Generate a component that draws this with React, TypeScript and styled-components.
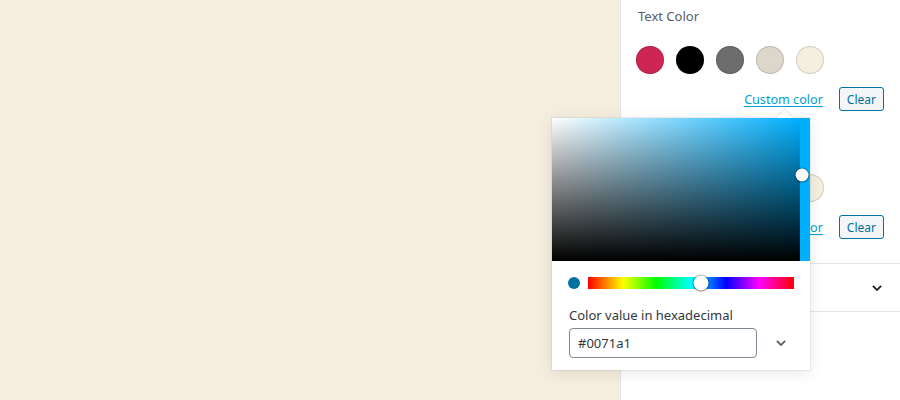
import styled, { createGlobalStyle } from "styled-components";

const GlobalStyle = createGlobalStyle`
  html, body {
    margin: 0;
    padding: 0;
    background: #f5eddd;
    font-family: "Noto Sans", "Open Sans", sans-serif;
  }
`;

const palette = ["#cd2653", "#000000", "#6d6d6d", "#dcd7ca", "#f5efe0"];

const Page = styled.div`
  position: relative;
  display: flex;
  width: 900px;
  height: 400px;
  overflow: hidden;
`;

const Canvas = styled.main`
  flex: 1;
  background: #f5eddd;
`;

const Sidebar = styled.aside`
  width: 279px;
  background: #fff;
  border-left: 1px solid #e2e4e7;
  display: flex;
  flex-direction: column;
`;

const PanelBody = styled.div`
  padding: 6px 16px 24px 15px;
  border-bottom: 1px solid #e2e4e7;
`;

const Section = styled.div`
  & + & {
    margin-top: 23px;
  }
`;

const Label = styled.div`
  font-size: 13px;
  line-height: 20px;
  color: #555d66;
  margin-left: 2px;
`;

const Swatches = styled.div`
  display: flex;
  gap: 12px;
  margin-top: 20px;
`;

const Swatch = styled.span<{ $color: string }>`
  width: 28px;
  height: 28px;
  border-radius: 50%;
  background: ${(p) => p.$color};
  box-shadow: inset 0 0 0 1px rgba(0, 0, 0, 0.14);
`;

const Actions = styled.div`
  display: flex;
  justify-content: flex-end;
  align-items: center;
  gap: 16px;
  margin-top: 13px;
`;

const CustomLink = styled.a`
  font-size: 12.6px;
  color: #00a0d2;
  text-decoration: underline;
  text-underline-offset: 2px;
`;

const ClearButton = styled.button`
  height: 24px;
  padding: 0 7px;
  font-family: inherit;
  font-size: 12px;
  color: #0071a1;
  background: #f3f5f6;
  border: 1px solid #0071a1;
  border-radius: 3px;
`;

const PanelHeader = styled.div`
  display: flex;
  align-items: center;
  justify-content: space-between;
  height: 47px;
  padding: 0 16px;
  border-bottom: 1px solid #e2e4e7;
  font-size: 13px;
  font-weight: 600;
  color: #191e23;
`;

const Popover = styled.div`
  position: absolute;
  left: 552px;
  top: 118px;
  width: 258px;
  background: #fff;
  box-shadow: 0 0 0 1px rgba(0, 0, 0, 0.05), 0 3px 14px rgba(25, 30, 35, 0.1);
`;

const Arrow = styled.span`
  position: absolute;
  top: -6px;
  right: 20px;
  width: 11px;
  height: 11px;
  background: #fff;
  transform: rotate(45deg);
  box-shadow: -1px -1px 0 rgba(0, 0, 0, 0.08);
`;

const Saturation = styled.div<{ $hue: string }>`
  position: relative;
  display: flex;
  height: 143px;
  background: ${(p) => p.$hue};
`;

const SatField = styled.div<{ $hue: string }>`
  flex: 1;
  margin-right: 10px;
  background: linear-gradient(to top, #000, rgba(0, 0, 0, 0)),
    linear-gradient(to right, #fff, rgba(255, 255, 255, 0)), ${(p) => p.$hue};
`;

const Pointer = styled.span`
  position: absolute;
  width: 13px;
  height: 13px;
  border-radius: 50%;
  background: #fff;
  box-shadow: 0 0 0 1px rgba(0, 0, 0, 0.25), 0 1px 2px rgba(0, 0, 0, 0.3);
  transform: translate(-50%, -50%);
`;

const Body = styled.div`
  padding: 16px 16px 12px;
`;

const HueRow = styled.div`
  display: flex;
  align-items: center;
  gap: 8px;
`;

const Dot = styled.span<{ $color: string }>`
  width: 12px;
  height: 12px;
  border-radius: 50%;
  background: ${(p) => p.$color};
`;

const HueBar = styled.div`
  position: relative;
  flex: 1;
  height: 12px;
  background: linear-gradient(
    to right,
    #f00 0%,
    #ff0 17%,
    #0f0 33%,
    #0ff 50%,
    #00f 67%,
    #f0f 83%,
    #f00 100%
  );
`;

const HueHandle = styled(Pointer)`
  top: 50%;
  width: 15px;
  height: 15px;
`;

const FieldLabel = styled.div`
  margin: 18px 0 5px 1px;
  font-size: 13px;
  line-height: 16px;
  color: #32373c;
`;

const FieldRow = styled.div`
  display: flex;
  align-items: center;
  gap: 12px;
  padding-left: 1px;
`;

const HexInput = styled.div`
  box-sizing: border-box;
  width: 188px;
  height: 30px;
  padding: 0 8px;
  display: flex;
  align-items: center;
  font-size: 13px;
  color: #32373c;
  border: 1px solid #7e8993;
  border-radius: 4px;
`;

const IconButton = styled.span`
  display: flex;
  width: 24px;
  justify-content: center;
  color: #555d66;
`;

const Chevron = ({ color = "currentColor" }: { color?: string }) => (
  <svg width="14" height="14" viewBox="0 0 24 24" fill="none">
    <path d="M5 8.5l7 7 7-7" stroke={color} strokeWidth="3.2" />
  </svg>
);

const ColorSection = ({ label }: { label: string }) => (
  <Section>
    <Label>{label}</Label>
    <Swatches>
      {palette.map((c) => (
        <Swatch key={c} $color={c} />
      ))}
    </Swatches>
    <Actions>
      <CustomLink>Custom color</CustomLink>
      <ClearButton>Clear</ClearButton>
    </Actions>
  </Section>
);

export default function App() {
  const hue = "#00b0ff";
  const value = "#0071a1";
  return (
    <>
      <GlobalStyle />
      <Page>
        <Canvas />
        <Sidebar>
          <PanelBody>
            <ColorSection label="Text Color" />
            <ColorSection label="Background Color" />
          </PanelBody>
          <PanelHeader>
            Advanced
            <Chevron color="#191e23" />
          </PanelHeader>
        </Sidebar>
        <Popover>
          <Arrow />
          <Saturation $hue={hue}>
            <SatField $hue={hue} />
            <Pointer style={{ left: 250, top: 57 }} />
          </Saturation>
          <Body>
            <HueRow>
              <Dot $color={value} />
              <HueBar>
                <HueHandle style={{ left: "55%" }} />
              </HueBar>
            </HueRow>
            <FieldLabel>Color value in hexadecimal</FieldLabel>
            <FieldRow>
              <HexInput>{value}</HexInput>
              <IconButton>
                <Chevron />
              </IconButton>
            </FieldRow>
          </Body>
        </Popover>
      </Page>
    </>
  );
}
